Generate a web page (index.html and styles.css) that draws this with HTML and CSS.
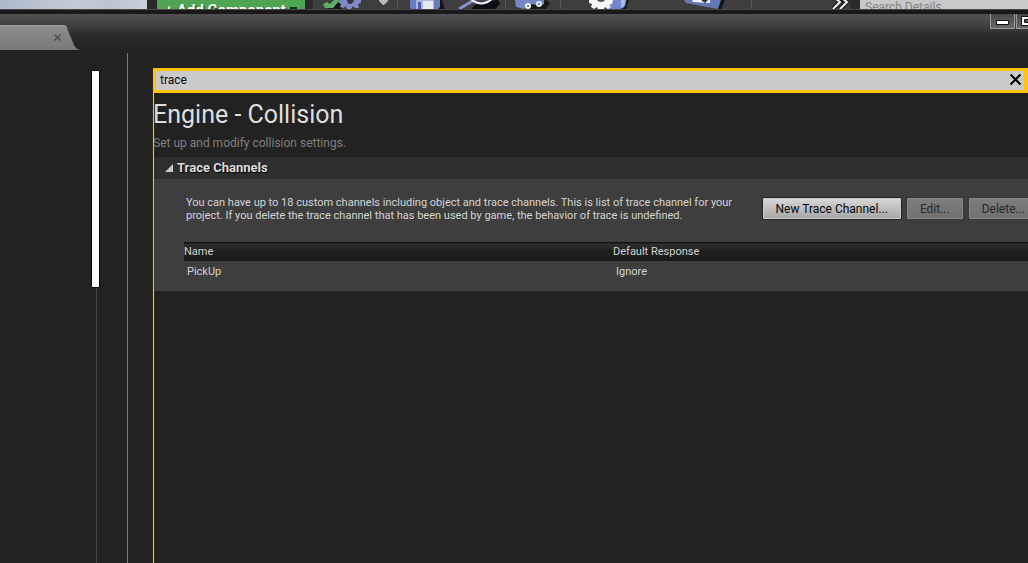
FILE: index.html
```
<!DOCTYPE html>
<html lang="en">
<head>
<meta charset="utf-8">
<title>Project Settings</title>
<link rel="stylesheet" href="styles.css">
</head>
<body>
<div class="app">
  <div class="editor-strip">
    <div class="viewport"></div>
    <button class="add-component" type="button">+ Add Component <span class="caret"></span></button>
    <div class="toolbar">
      <div class="tool tool-source">
        <svg width="84" height="9" viewBox="0 0 84 9" aria-hidden="true">
          <path d="M15 9l9-9h12l-8 9z" fill="#161616"/>
          <path d="M10 4l4-2 3 2 4-4h6l-7 8h-8z" fill="#5fae68"/>
          <path d="M27 0h21v3l-3 1 1 4h-4l-2-2-2 3h-4l-1-3-3 2-3-1 1-3-3-2z" fill="#7f8bc4"/>
          <path d="M34 0h7q-1 4-4 4t-3-4z" fill="#34374a"/>
          <path d="M66 0h9v1l-4 4h-1l-4-4z" fill="#b9b9b9"/>
        </svg>
      </div>
      <div class="tool tool-file">
        <svg width="107" height="9" viewBox="0 0 107 9" aria-hidden="true">
          <path d="M40 0h4l3 9H40z" fill="#151515"/>
          <path d="M12 0h30v7l-2 2H13l-1-2z" fill="#667cbd"/>
          <path d="M18 0h18v9H18z" fill="#aab6df"/>
          <path d="M25 1h10v8H25z" fill="#e6e9ee"/>
          <path d="M20 2h3v7h-3z" fill="#4c5e9e"/>
          <path d="M73 9l7-7 20-2 2 4-5 5z" fill="#0d0f16"/>
          <path d="M61 9L76 0" stroke="#8292d6" stroke-width="3"/>
          <path d="M73-1q10 9 21 0" fill="#3c4058" stroke="#eef1f5" stroke-width="2"/>
        </svg>
      </div>
      <div class="tool tool-find">
        <svg width="54" height="9" viewBox="0 0 54 9" aria-hidden="true">
          <path d="M12 5L40 0l4 3-4 6H22z" fill="#171717"/>
          <path d="M9 0h29v4l-4 2-8-2-8 5-8-2z" fill="#7588c4"/>
          <circle cx="22" cy="6" r="3" fill="#edf1f6"/>
          <circle cx="33" cy="4" r="3" fill="#e4e8f1"/>
          <circle cx="22" cy="6" r="1" fill="#4a5a92"/>
          <circle cx="33" cy="4" r="1" fill="#4a5a92"/>
        </svg>
      </div>
      <div class="tool tool-build">
        <svg width="190" height="9" viewBox="0 0 190 9" aria-hidden="true">
          <path d="M45 9l10-5 13-4-3 9z" fill="#151515"/>
          <path d="M46 0h19v3q-1 6-7 6H45z" fill="#6f87cc"/>
          <path d="M60 0h4v3q-1 4-4 5z" fill="#a9b9ea"/>
          <path d="M28 0h24l-1 4-3 1 2 2-3 2-3-2-1 2h-6l-1-2-3 2-3-2 1-3-3-1z" fill="#f7f7f4"/>
          <path d="M36 0h8q-1 2-4 2t-4-2z" fill="#4c5260"/>
          <path d="M158 0h6l-4 9h-5z" fill="#151515"/>
          <path d="M123 0h37l-3 9-32-6z" fill="#6479b8"/>
          <path d="M131 0h18v3l-17-1z" fill="#eef1f5"/>
          <path d="M140 0h7l-3 3z" fill="#262c40"/>
        </svg>
      </div>
      <div class="tool tool-more">
        <svg width="97" height="9" viewBox="0 0 97 9" aria-hidden="true">
          <path d="M84-1l4 3-7 7M91-1l4 3-7 7" fill="none" stroke="#111" stroke-width="4"/>
          <path d="M84-1l4 3-7 7M91-1l4 3-7 7" fill="none" stroke="#f4f4f4" stroke-width="2"/>
        </svg>
      </div>
    </div>
    <input class="details-search" type="text" placeholder="Search Details" aria-label="Search Details">
  </div>

  <header class="titlebar">
    <div class="tab">
      <svg class="tab-shape" viewBox="0 0 80 25" aria-hidden="true">
        <defs><linearGradient id="tabfill" x1="0" y1="0" x2="0" y2="1"><stop offset="0" stop-color="#8d8d8d"/><stop offset="1" stop-color="#797979"/></linearGradient></defs>
        <path d="M0 0H63Q66 0 67 3L74 20Q76 24 80 25H0Z" fill="url(#tabfill)"/>
        <path d="M0 .5H63Q66 .5 67 3" fill="none" stroke="#a0a0a0"/>
      </svg>
      <button class="tab-close" type="button" aria-label="Close tab">
        <svg width="7" height="7" viewBox="0 0 7 7" aria-hidden="true"><path d="M.5 .5l6 6M6.500 .5l-6 6" stroke="#4c4c4c" stroke-width="1.300"/></svg>
      </button>
    </div>
    <div class="window-buttons">
      <button type="button" aria-label="Minimize">
        <svg width="13" height="13" viewBox="0 0 13 13" aria-hidden="true"><path d="M.5 6.500h12v4H.5z" fill="#fff" stroke="#111"/></svg>
      </button>
      <button type="button" aria-label="Maximize">
        <svg width="15" height="13" viewBox="0 0 15 13" aria-hidden="true"><path d="M.5 2.500h14v9H.5z" fill="#fff" stroke="#111"/><path d="M3.500 5.500h8v3h-8z" fill="#555" stroke="#111"/></svg>
      </button>
    </div>
  </header>

  <div class="workspace">
    <aside class="sidebar">
      <div class="scroll"><div class="thumb"></div><div class="track"></div></div>
    </aside>
    <main class="settings">
      <div class="search">
        <input type="text" value="trace" aria-label="Search settings">
        <button type="button" aria-label="Clear search">
          <svg width="13" height="13" viewBox="0 0 13 13" aria-hidden="true"><path d="M1.500 1.500l10 10M11.500 1.500l-10 10" stroke="#050505" stroke-width="2"/></svg>
        </button>
      </div>
      <h1>Engine - Collision</h1>
      <p class="subtitle">Set up and modify collision settings.</p>
      <section>
        <h2><svg width="8" height="8" viewBox="0 0 8 8" aria-hidden="true"><path d="M8 0v8H0z" fill="#c8c8c8"/></svg>Trace Channels</h2>
        <div class="section-body">
          <div class="intro">
            <p>You can have up to 18 custom channels including object and trace channels. This is list of trace channel for your<br>project. If you delete the trace channel that has been used by game, the behavior of trace is undefined.</p>
            <div class="actions">
              <button type="button">New Trace Channel...</button>
              <button type="button" disabled>Edit...</button>
              <button type="button" disabled>Delete...</button>
            </div>
          </div>
          <table>
            <thead><tr><th scope="col">Name</th><th scope="col">Default Response</th></tr></thead>
            <tbody><tr><td>PickUp</td><td>Ignore</td></tr></tbody>
          </table>
        </div>
      </section>
    </main>
  </div>
</div>
</body>
</html>
```
FILE: styles.css
```
* { box-sizing: border-box; }
body {
  margin: 0;
  background: #222;
  color: #d4d4d4;
  font: 12px/16px Roboto, "Noto Sans", sans-serif;
}
button, input { font: inherit; margin: 0; }
button { padding: 0; border: 0; background: none; }
h1, h2, p { margin: 0; }
svg { display: block; flex: none; }
.app { display: flex; flex-direction: column; min-height: 100vh; overflow: hidden; }

.editor-strip {
  display: flex;
  align-items: flex-start;
  height: 14px;
  overflow: hidden;
  background: linear-gradient(#2a2a2a 9px, #484848 9px, #484848 10px, #191919 10px);
}
.editor-strip > * { height: 9px; overflow: hidden; }
.viewport {
  flex: 0 0 147px;
  background: linear-gradient(100deg, #aeb9ca, #c5cbd5 50%, #bdc5d1 75%, #cbd0d8);
}
.add-component {
  display: flex;
  flex: 0 0 148px;
  align-items: flex-start;
  gap: 4px;
  margin: 0 8px 0 10px;
  padding: 2px 8px 0;
  background: #50a552;
  color: #fff;
  font-size: 15px;
  font-weight: 700;
  white-space: nowrap;
  text-shadow: 1px 1px 1px #183a19;
}
.caret { width: 9px; height: 2px; margin-top: 5px; background: #17301a; }
.toolbar { display: flex; flex: 1; background: #3e3e3e; }
.tool { border-right: 1px solid #555; }
.tool-more { flex: 1; border: 0; }
.details-search {
  flex: 0 0 168px;
  margin-left: 10px;
  padding: 0 5px;
  border: 0;
  background: #c9c9c9;
  color: #777;
  line-height: 16px;
}
.editor-strip .details-search { height: 14px; clip-path: inset(0 0 5px); }
.details-search::placeholder { color: #858585; opacity: 1; }

.titlebar {
  display: flex;
  justify-content: space-between;
  align-items: flex-start;
  height: 36px;
  background: linear-gradient(#515151, #464646 8px, #2b2b2b 21px, #222);
}
.tab { display: grid; width: 80px; margin-top: 11px; }
.tab-shape, .tab-close { grid-area: 1 / 1; }
.tab-close { place-self: center end; margin-right: 19px; }
.window-buttons { display: flex; gap: 1px; margin-right: -13px; }
.window-buttons button {
  display: grid;
  place-items: start center;
  width: 25px;
  height: 15px;
  border: 1px solid #999;
  border-top: 0;
  background: linear-gradient(#484848, #686868);
}

.workspace { display: flex; flex: 1; padding-top: 3px; }
.sidebar {
  display: flex;
  flex: 0 0 128px;
  justify-content: flex-end;
  padding: 17px 27px 0 0;
  border-right: 1px solid #777;
}
.scroll { display: flex; flex-direction: column; align-items: center; width: 9px; }
.thumb { width: 9px; height: 218px; border: 1px solid #080808; border-radius: 1px; background: #fff; }
.track { flex: 1; width: 1px; margin-left: 2px; background: #444; }
.settings {
  flex: 1;
  min-width: 0;
  margin: 15px 0 0 25px;
  border-left: 1px solid #fdc30f;
  box-shadow: -1px 0 #332a14, inset 1px 0 #332a14;
}
.search {
  display: flex;
  align-items: center;
  margin-left: -1px;
  padding-right: 2px;
  border: 3px solid #fdc30f;
  border-right-width: 4px;
  border-radius: 2px 0 0 0;
  background: #cacaca;
}
.search input {
  flex: 1;
  min-width: 0;
  height: 19px;
  padding: 0 4px 2px;
  border: 0;
  outline: 0;
  background: none;
  color: #080808;
}
.search button { padding-bottom: 2px; }
h1 { margin-left: -1px; padding: 7px 0 3px; font-size: 25px; font-weight: 400; line-height: 30px; color: #dedede; }
.subtitle { margin-left: -1px; padding: 2px 0 6px; color: #7f7f7f; }
h2 {
  display: flex;
  align-items: center;
  gap: 4px;
  height: 22px;
  padding-left: 11px;
  background: #2f2f2f;
  color: #dcdcdc;
  font-size: 13px;
  font-weight: 700;
  text-shadow: 1px 1px 1px #000;
}
.section-body { padding: 17px 0 9px 30px; background: #3e3e3e; overflow: hidden; }
.intro { display: flex; align-items: flex-start; justify-content: space-between; margin-right: -11px; }
.intro p { padding-left: 2px; font-size: 11px; line-height: 13px; white-space: nowrap; }
.actions { display: flex; gap: 4px; padding-top: 1px; }
.actions button {
  height: 23px;
  padding: 0 13px;
  border: 1px solid #222;
  border-radius: 2px;
  background: linear-gradient(#d9d9d9, #a4a4a4);
  box-shadow: inset 0 0 0 1px #ccc;
  color: #050505;
  white-space: nowrap;
}
.actions button:disabled {
  border-color: #383838;
  background: linear-gradient(#7d7d7d, #707070);
  box-shadow: inset 0 0 0 1px #888;
  color: #292929;
}
table { width: 100%; margin-top: 20px; border-collapse: collapse; table-layout: fixed; font-size: 11px; }
th, td { padding: 0; font-weight: 400; text-align: left; }
th { height: 19px; }
th:first-child { width: 429px; }
thead { background: linear-gradient(#121212 1px, #303030 2px, #1c1c1c 10px, #1c1c1c 18px, #141414); }
td { height: 21px; padding-left: 3px; }
```
